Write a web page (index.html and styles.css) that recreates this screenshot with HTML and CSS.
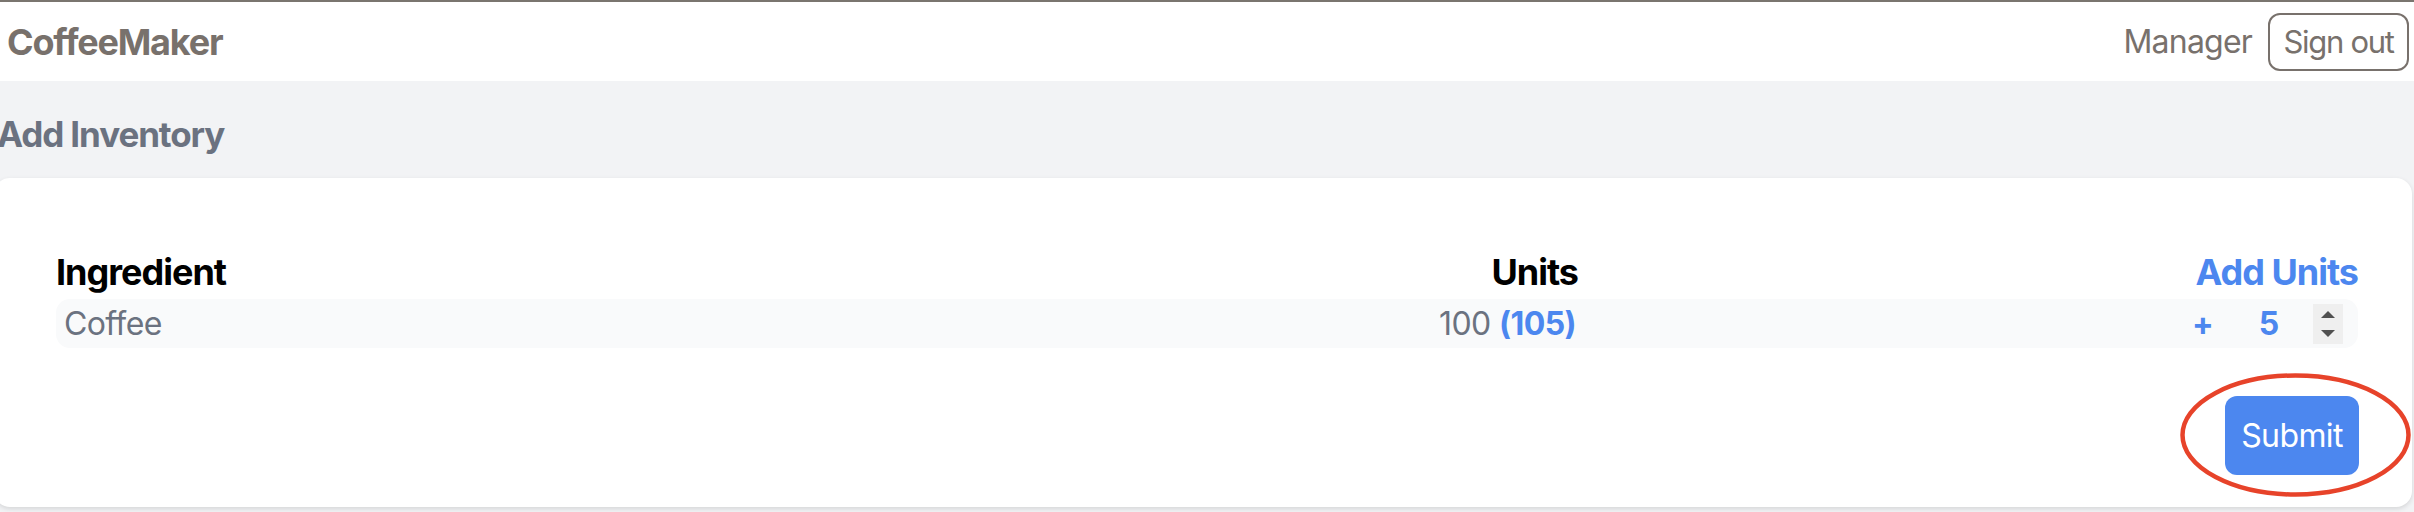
FILE: index.html
```html
<!DOCTYPE html>
<html lang="en">
<head>
<meta charset="utf-8">
<title>CoffeeMaker - Add Inventory</title>
<link rel="stylesheet" href="styles.css">
</head>
<body>
<header class="topbar">
  <div class="brand">CoffeeMaker</div>
  <div class="user">
    <span class="role">Manager</span>
    <button class="signout">Sign out</button>
  </div>
</header>
<main class="main">
  <h2 class="page-title">Add Inventory</h2>
  <section class="card">
    <div class="grid head">
      <div class="cell">Ingredient</div>
      <div class="cell right">Units</div>
      <div class="cell right blue">Add Units</div>
    </div>
    <div class="grid row">
      <div class="cell name">Coffee</div>
      <div class="cell right units">100 <strong class="blue">(105)</strong></div>
      <div class="cell add">
        <span class="plus">+</span>
        <input class="qty" type="text" value="5">
        <span class="spinner"><span class="tri up"></span><span class="tri down"></span></span>
      </div>
    </div>
    <div class="actions">
      <span class="submit-wrap">
        <button class="submit">Submit</button>
        <svg class="ring" width="231" height="124" viewBox="0 0 231 124"><ellipse cx="115.5" cy="62" rx="113" ry="59.5" fill="none" stroke="#e7432a" stroke-width="4.5"/></svg>
      </span>
    </div>
  </section>
</main>
</body>
</html>
```

FILE: styles.css
```css
* { box-sizing: border-box; }
html, body { margin: 0; padding: 0; }
body {
  width: 2414px;
  height: 512px;
  overflow: hidden;
  background: #f2f3f5;
  font-family: Inter, "Noto Sans", "Liberation Sans", sans-serif;
}
.topbar {
  height: 81px;
  border-top: 2px solid #7a756f;
  background: #ffffff;
  display: flex;
  align-items: center;
  justify-content: space-between;
  padding: 0 5px 0 7px;
}
.brand {
  font-size: 36px;
  font-weight: 700;
  color: #78716c;
  letter-spacing: -1.2px;
}
.user {
  display: flex;
  align-items: center;
  gap: 16px;
}
.role {
  font-size: 32px;
  color: #78716c;
  letter-spacing: -0.8px;
}
.signout {
  height: 58px;
  width: 141px;
  border: 2px solid #78716c;
  border-radius: 12px;
  background: #fff;
  color: #78716c;
  font-family: inherit;
  font-size: 31px;
  letter-spacing: -1.3px;
  padding: 0;
}
.main {
  padding-top: 26px;
}
.page-title {
  margin: 0 0 0 -3px;
  font-size: 35px;
  line-height: 54px;
  font-weight: 700;
  color: #6b7280;
  letter-spacing: -1.1px;
}
.card {
  margin: 17px 0 0 -6px;
  width: 2418px;
  background: #fff;
  border-radius: 16px;
  box-shadow: 0 2px 5px rgba(0,0,0,0.12);
  padding: 67px 54px 32px 62px;
}
.grid {
  display: grid;
  grid-template-columns: 1fr 400px 780px;
  align-items: center;
}
.head {
  font-size: 36px;
  line-height: 54px;
  font-weight: 700;
  color: #000;
  letter-spacing: -1px;
}
.right { text-align: right; }
.blue { color: #4c87ef; }
.row {
  height: 49px;
  background: #f9fafb;
  border-radius: 14px;
  font-size: 32px;
  color: #6b7280;
  letter-spacing: -0.6px;
}
.name { padding-left: 8px; }
.units { padding-right: 2px; }
.units strong { font-weight: 700; }
.add {
  display: flex;
  align-items: center;
  justify-content: flex-end;
  padding-right: 15px;
}
.plus {
  color: #4c87ef;
  font-weight: 700;
  font-size: 32px;
  margin-right: 12px;
}
.qty {
  width: 88px;
  border: none;
  background: transparent;
  text-align: center;
  font-family: inherit;
  font-size: 32px;
  font-weight: 700;
  color: #4c87ef;
  padding: 0;
  outline: none;
}
.spinner {
  width: 30px;
  height: 40px;
  background: #efefef;
  display: flex;
  flex-direction: column;
  align-items: center;
  justify-content: center;
  gap: 12px;
}
.tri {
  width: 0;
  height: 0;
  border-left: 7px solid transparent;
  border-right: 7px solid transparent;
}
.tri.up { border-bottom: 7px solid #505050; }
.tri.down { border-top: 7px solid #505050; }
.actions {
  display: flex;
  justify-content: flex-end;
  margin-top: 48px;
}
.submit-wrap {
  position: relative;
  display: inline-block;
  margin-right: -1px;
}
.submit {
  display: block;
  width: 134px;
  height: 79px;
  border: none;
  border-radius: 12px;
  background: #4c87ef;
  color: #fff;
  font-family: inherit;
  font-size: 32px;
  letter-spacing: -0.6px;
  padding: 0;
}
.ring {
  position: absolute;
  left: -45px;
  top: -23px;
  pointer-events: none;
}
```
